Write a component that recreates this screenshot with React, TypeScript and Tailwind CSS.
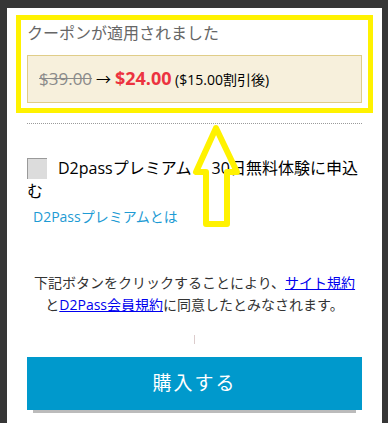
import React from "react";

const font = { fontFamily: '"Open Sans", "Noto Sans CJK JP", sans-serif' };

export default function App() {
  return (
    <div className="relative w-[388px] h-[423px] overflow-hidden bg-[#363636] pl-[7px] pt-[8px] pr-[6px]" style={font}>
      <div className="h-full bg-white pl-[20px] pr-[20px] pt-[13px]">
        <div className="text-[16px] leading-[24px] text-[#666666]">クーポンが適用されました</div>
        <div className="mt-[10px] border border-[#e0cd88] bg-[#f7f0dc] pl-[11px] py-[10px] leading-[24px] whitespace-nowrap">
          <span className="text-[17px] text-[#8a8a8a] line-through">$39.00</span>
          <span className="text-[15px] text-black"> → </span>
          <span className="text-[18px] font-bold text-[#ec3340]">$24.00</span>
          <span className="text-[14px] text-black"> ($15.00割引後)</span>
        </div>
        <div className="mt-[20px] border-t border-dotted border-[#9a9a9a]" />
        <p className="mt-[33px] text-[16px] leading-[23px] text-black">
          <span className="inline-block align-middle w-[20px] h-[21px] bg-[#dcdcdc] border-l border-t border-[#9a9a9a] mr-[11px] -mt-[3px]" />
          D2passプレミアム<span className="inline-block w-[20px]" />30日無料体験に申込む
        </p>
        <div className="mt-[4px] pl-[6px] text-[14px] leading-[20px] text-[#1d9bd4]">D2Passプレミアムとは</div>
        <p className="mt-[45px] text-center text-[14px] leading-[22px] text-[#333333]">
          下記ボタンをクリックすることにより、<span className="text-[#0000ee] underline">サイト規約</span>
          <br />
          と<span className="text-[#0000ee] underline">D2Pass会員規約</span>に同意したとみなされます。
        </p>
        <div className="mt-[19px] mx-auto w-px h-[9px] bg-[#dccccc]" />
        <button className="mt-[13px] w-full h-[53px] bg-[#0099cc] text-white text-[19px] tracking-[2px] shadow-[0_9px_0_-6px_#bbbbbb]">
          購入する
        </button>
      </div>
      <div className="absolute left-[16px] top-[15px] w-[357px] h-[98px] border-[5px] border-[#fff200] pointer-events-none" />
      <svg className="absolute left-0 top-0 pointer-events-none" width="388" height="423">
        <polygon
          points="216,128 196,172 206,172 206,224 227,224 227,172 237,172"
          fill="none"
          stroke="#fff200"
          strokeWidth="6"
          strokeLinejoin="round"
        />
      </svg>
    </div>
  );
}
